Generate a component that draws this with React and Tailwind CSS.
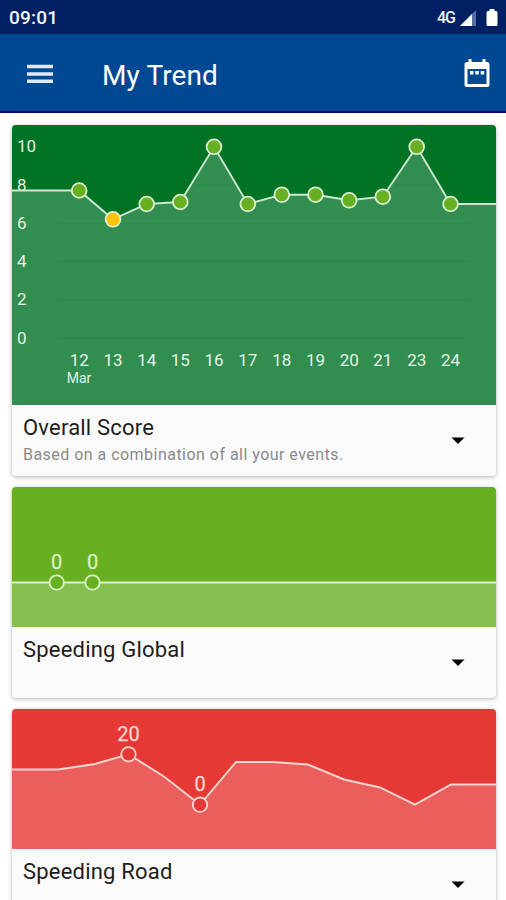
const scorePoints = [
  ['12', 67.2, 65.5], ['13', 101, 94.3], ['14', 134.7, 79], ['15', 168.3, 77],
  ['16', 202, 21.8], ['17', 235.8, 79], ['18', 269.8, 69.7], ['19', 303.5, 69.7],
  ['20', 337.2, 75.3], ['21', 370.8, 71.7], ['23', 404.7, 21.8], ['24', 438.5, 79],
];

const axis = [['10', 21.7], ['8', 60], ['6', 98.2], ['4', 136.4], ['2', 174.7], ['0', 213]];

function ScoreChart() {
  const line = '0,65.5 ' + scorePoints.map((p) => p[1] + ',' + p[2]).join(' ') + ' 484,79';
  return (
    <svg className="block h-[280px] w-full bg-[#007424]" viewBox="0 0 484 280" preserveAspectRatio="none">
      <polygon points={'0,280 ' + line + ' 484,280'} fill="#328e50" />
      {axis.map(([n, y]) => (
        <line key={n} x1="45" x2="458" y1={y} y2={y} stroke="#004d18" strokeOpacity="0.1" />
      ))}
      <g fill="#e3f3e6" fontSize="17">
        {axis.map(([n, y]) => (
          <text key={n} x="5" y={y + 5.7}>{n}</text>
        ))}
      </g>
      <polyline points={line} fill="none" stroke="#cfe8d2" strokeWidth="1.9" />
      {scorePoints.map(([day, x, y]) => (
        <circle key={day} cx={x} cy={y} r="7.4" fill={day === '13' ? '#ffc107' : '#67b021'} stroke="#d9f0cf" strokeWidth="1.8" />
      ))}
      <g fill="#e3f3e6" fontSize="17" textAnchor="middle">
        {scorePoints.map(([day, x]) => (
          <text key={day} x={x} y="241">{day}</text>
        ))}
        <text x="67" y="258" fontSize="14">Mar</text>
      </g>
    </svg>
  );
}

function EventChart({ line, marks, bg, area, stroke }) {
  return (
    <svg className="block h-[140px] w-full" viewBox="0 0 484 140" preserveAspectRatio="none">
      <rect width="484" height="140" fill={bg} />
      <polygon points={'0,140 ' + line + ' 484,140'} fill={area} />
      <polyline points={line} fill="none" stroke={stroke} strokeWidth="1.9" />
      {marks.map(([label, x, y]) => (
        <g key={x}>
          <circle cx={x} cy={y} r="7.2" fill={bg} stroke={stroke} strokeWidth="1.8" />
          <text x={x} y={y - 13.5} fill={stroke} stroke={stroke} strokeWidth="0.25" fontSize="20" textAnchor="middle">{label}</text>
        </g>
      ))}
    </svg>
  );
}

function Card({ title, note, children }) {
  return (
    <section className="shrink-0 overflow-hidden rounded-[4px] bg-[#fafafa] shadow-[0_1px_4px_rgba(0,0,0,0.3)]">
      {children}
      <div className="flex h-[71px] items-center justify-between pr-[31px] pl-[11px]">
        <div className="h-full pt-[9px]">
          <h2 className="text-[22px] leading-[28px] tracking-[0.2px] text-[#1d1d1d]">{title}</h2>
          {note && <p className="text-[16px] leading-[26px] tracking-[0.47px] text-[#8a8a8a]">{note}</p>}
        </div>
        <svg className="h-[8px] w-[14px]" viewBox="0 0 14 8">
          <path d="M0.5 0.5h13L7 7z" fill="#000" />
        </svg>
      </div>
    </section>
  );
}

export default function App() {
  return (
    <div className="flex h-[900px] w-[506px] flex-col overflow-hidden bg-white font-[Roboto,sans-serif]">
      <div className="flex h-[34px] shrink-0 items-center justify-between bg-[#002063] pr-[8px] pl-[9px] text-[#f4f6fc]">
        <span className="pt-[2px] text-[19px] font-medium tracking-[0.2px]">09:01</span>
        <div className="flex items-center pt-[1px]">
          <span className="text-[16px] font-medium tracking-[-1px]">4G</span>
          <svg className="ml-[4px] h-[18px] w-[39px]" viewBox="0 0 39 18">
            <path d="M17 1v16H1z" fill="#5370a5" />
            <path d="M13 5v12H1z" fill="#fff" />
            <path d="M30.500 0h5v2h1.500q1.500 0 1.500 1.500v12q0 1.500-1.500 1.500h-8q-1.500 0-1.500-1.500v-12q0-1.500 1.500-1.500h1.500z" fill="#fff" />
          </svg>
        </div>
      </div>
      <header className="flex h-[79px] shrink-0 items-center border-b-2 border-[#090078] bg-[#004891] pr-[15px] pl-[27px] text-white">
        <svg className="h-[20px] w-[26px]" viewBox="0 0 26 20">
          <path d="M0 3.500h26M0 11h26M0 18.300h26" stroke="#e1e8f6" strokeWidth="3.400" />
        </svg>
        <h1 className="ml-[49px] flex-1 pt-[6px] text-[28px] leading-[32px] tracking-[0.1px]">My Trend</h1>
        <svg className="h-[30px] w-[28px]" viewBox="0 0 28 30">
          <path fillRule="evenodd" fill="#fff" d="M5.500 1h3v3h11V1h3v3H24q2.500 0 2.500 2.500v20Q26.500 29 24 29H4q-2.500 0-2.500-2.500v-20Q1.500 4 4 4h1.500zM4.500 11v15h19V11z" />
          <path d="M7 13h3.500v3.500H7zM12.300 13h3.500v3.500h-3.500zM17.700 13h3.500v3.500h-3.500z" fill="#fff" />
        </svg>
      </header>
      <main className="flex flex-1 flex-col gap-[11px] overflow-hidden pt-[12px] pr-[10px] pl-[12px]">
        <Card title="Overall Score" note="Based on a combination of all your events.">
          <ScoreChart />
        </Card>
        <Card title="Speeding Global">
          <EventChart
            line="0,95.500 484,95.500"
            marks={[['0', 44.7, 95.5], ['0', 80.5, 95.5]]}
            bg="#68b022" area="#85bf4f" stroke="#daf2c5"
          />
        </Card>
        <Card title="Speeding Road">
          <EventChart
            line="0,60.5 46,60.5 83,55 116.5,45.3 152,67.5 188,95.7 224,53 260,53 296,55.5 332,70.5 368,78.5 403,95.7 439,75.5 484,75.5"
            marks={[['20', 116.5, 45.3], ['0', 188, 95.7]]}
            bg="#e53935" area="#ea5e5b" stroke="#ffd6d0"
          />
        </Card>
      </main>
    </div>
  );
}
